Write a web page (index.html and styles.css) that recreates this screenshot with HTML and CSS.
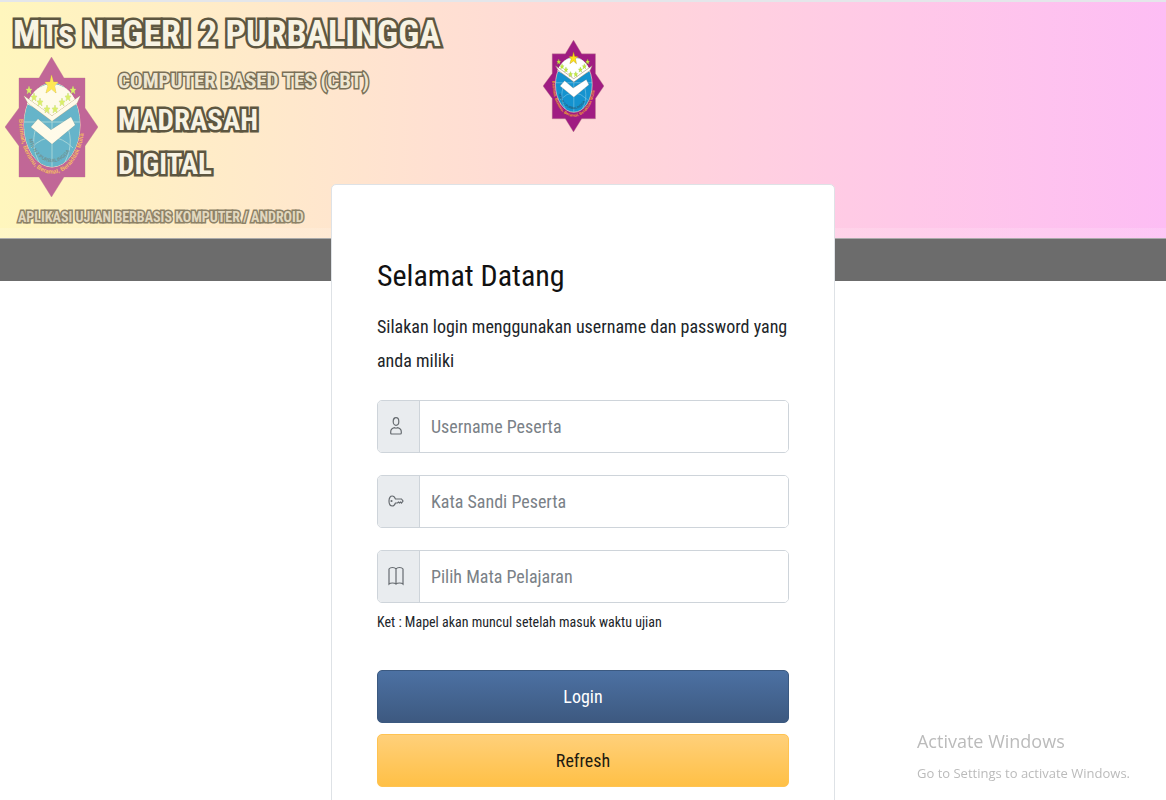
FILE: index.html
```html
<!DOCTYPE html>
<html lang="id">
<head>
    <meta charset="UTF-8">
    <meta name="viewport" content="width=device-width, initial-scale=1.0">
    <title>CBT MTs Negeri 2 Purbalingga</title>
    <link rel="stylesheet" href="styles.css">
</head>
<body>
    <header class="banner">
        <div class="brand">
            <h1 class="school">MTs NEGERI 2 PURBALINGGA</h1>
            <div class="brand-row">
                <svg class="emblem-large" viewBox="0 0 93 140" role="img" aria-label="Logo madrasah">
                    <g id="emblem">
                        <path fill="#a01c82" stroke="#b98a8a" stroke-width="0.6" d="M46.500 0L59 21H80V51L93 70L80 89V120H59L46.500 140L34 120H14V89L0 70L14 51V21H34Z"/>
                        <ellipse cx="47" cy="68" rx="28" ry="42" fill="#1593cf" stroke="#f3ddc0"/>
                        <path fill="none" stroke="#8fd0ea" stroke-width="0.8" d="M19 65H75M47 28V110M26 91Q47 70 68 91M34 105C26 90 28 75 34 64M60 105C68 90 66 75 60 64"/>
                        <path fill="#fff" d="M22 47C27 33 37 27 47 27S67 33 72 47L66 50L47 62L28 50Z"/>
                        <path fill="#fff" stroke="#9a7c60" stroke-width="0.8" d="M19 39L47 59L75 39L72 46L47 64L23 46Z"/>
                        <path fill="#fff" stroke="#776655" stroke-width="0.4" d="M33 62L46 73L66 60L70 68L47 87L26 70Z"/>
                        <path fill="#ffe21a" stroke="#a98a10" stroke-width="0.6" d="M46.500 18L48.500 25H53L49.500 29L51 36L46.500 32L41 36L43 29L40 25H45Z"/>
                        <g fill="#c8ec3c" stroke="#86b83a" stroke-width="0.4">
                            <path d="M24 29L25 32H27L25.500 34L26 37L24 35L22 37L22.500 34L21 32H23Z"/>
                            <path d="M68 29L69 32H71L69.500 34L70 37L68 35L66 37L66.500 34L65 32H67Z"/>
                            <path d="M29 36L30 39H32L30.500 41L31 44L29 42L27 44L27.500 41L26 39H28Z"/>
                            <path d="M63 36L64 39H66L64.500 41L65 44L63 42L61 44L61.500 41L60 39H62Z"/>
                            <path d="M35 41L36 44H38L36.500 46L37 49L35 47L33 49L33.500 46L32 44H34Z"/>
                            <path d="M57 41L58 44H60L58.500 46L59 49L57 47L55 49L55.500 46L54 44H56Z"/>
                            <path d="M42 48L43 51H45L43.500 53L44 56L42 54L40 56L40.500 53L39 51H41Z"/>
                            <path d="M50 48L51 51H53L51.500 53L52 56L50 54L48 56L48.500 53L47 51H49Z"/>
                        </g>
                        <path id="arc-in" fill="none" d="M24 82C32 113 62 113 70 82"/>
                        <path id="arc-out" fill="none" d="M14 62C15 135 79 135 80 62"/>
                        <text class="emblem-name"><textPath href="#arc-in">MTs N 2 PURBALINGGA</textPath></text>
                        <text class="emblem-motto"><textPath href="#arc-out">Beriman, Berilmu, Beramal, Berakhlak Mulia</textPath></text>
                    </g>
                </svg>
                <div class="brand-text">
                    <p class="cbt">COMPUTER BASED TES (CBT)</p>
                    <p class="digital">MADRASAH<br>DIGITAL</p>
                </div>
            </div>
            <p class="tagline">APLIKASI UJIAN BERBASIS KOMPUTER / ANDROID</p>
        </div>
        <svg class="emblem-small" viewBox="0 0 93 140" role="img" aria-label="Logo madrasah"><use href="#emblem"/></svg>
    </header>
    <div class="strip"></div>

    <main class="card">
        <h2>Selamat Datang</h2>
        <p class="intro">Silakan login menggunakan username dan password yang anda miliki</p>
        <form>
            <div class="input-group">
                <label for="username" aria-label="Username">
                    <svg class="icon" viewBox="0 0 12 18"><ellipse cx="6" cy="4.500" rx="2.800" ry="3.800"/><path d="M0.700 15C0.700 12 3 11 4.500 10.700Q6 11.500 7.500 10.700C9 11 11.300 12 11.300 15V16Q11.300 17 10.300 17H1.700Q0.700 17 0.700 16Z"/></svg>
                </label>
                <input type="text" id="username" placeholder="Username Peserta">
            </div>
            <div class="input-group">
                <label for="password" aria-label="Kata sandi">
                    <svg class="icon icon-key" viewBox="0 0 16 12"><path d="M7.500 4H13.500L15 6L13.500 8L12.500 7L11.500 8L10.500 7L9.500 8H7.500C6.500 10.500 5.500 11 4.300 11C2.300 11 1 9 1 6S2.300 1 4.300 1C5.500 1 6.500 1.500 7.500 4Z"/><circle cx="3.500" cy="6" r="0.500"/></svg>
                </label>
                <input type="password" id="password" placeholder="Kata Sandi Peserta">
            </div>
            <div class="input-group">
                <label for="mapel" aria-label="Mata pelajaran">
                    <svg class="icon icon-book" viewBox="0 0 16 20"><path d="M8 3Q7 1.500 4.500 1.500T1 3V18Q2 17 4.500 17T8 18Q9 17 11.500 17T15 18V3Q14 1.500 11.500 1.500T8 3V18"/></svg>
                </label>
                <select id="mapel">
                    <option>Pilih Mata Pelajaran</option>
                </select>
            </div>
            <p class="note">Ket : Mapel akan muncul setelah masuk waktu ujian</p>
            <button type="submit" class="btn btn-login">Login</button>
            <button type="button" class="btn btn-refresh">Refresh</button>
        </form>
    </main>

    <aside class="watermark">
        <p class="watermark-title">Activate Windows</p>
        <p>Go to Settings to activate Windows.</p>
    </aside>
</body>
</html>
```
FILE: styles.css
```css
* {
    box-sizing: border-box;
}

body {
    margin: 0;
    background-color: #fff;
    color: #212529;
    font-family: "Roboto Condensed", "Liberation Sans Narrow", Roboto, sans-serif;
    overflow-x: hidden;
}

h1, h2, p {
    margin: 0;
    font-weight: normal;
}

.banner {
    display: grid;
    grid-template-columns: 543px 1fr;
    height: 239px;
    border-top: 2px solid #e4e6ea;
    border-bottom: 1px solid #aaa;
    background:
        linear-gradient(rgba(255, 255, 255, 0.15), rgba(255, 255, 255, 0.15)) bottom / 100% 10px no-repeat,
        linear-gradient(to right, #fff6bd, #ffe8cc 25%, #ffd8d8 50%, #ffc8e8 78%, #fdbdf4);
}

.brand {
    color: #f8f3e3;
    -webkit-text-stroke: 5px #5d5640;
    paint-order: stroke fill;
    white-space: nowrap;
}

.brand p, .school {
    font-weight: bold;
}

.school {
    padding: 9px 0 0 13px;
    font-size: 36px;
    line-height: 46px;
}

.brand-row {
    display: flex;
    gap: 20px;
    padding-left: 5px;
}

.emblem-large {
    width: 93px;
    height: 140px;
    opacity: 0.65;
    -webkit-text-stroke: 0;
}

.brand-text {
    padding-top: 7px;
}

.brand .cbt {
    font-size: 21px;
    line-height: 34px;
    color: #eee6d0;
    -webkit-text-stroke: 3px #7a7058;
}

.digital {
    font-size: 29px;
    line-height: 44px;
}

.brand .tagline {
    padding: 8px 0 0 18px;
    font-size: 14px;
    line-height: 24px;
    color: #e2d8bf;
    -webkit-text-stroke: 3px #8d8267;
}

.emblem-small {
    width: 61px;
    height: 92px;
    margin-top: 38px;
}

.emblem-name {
    font: bold 5px "Liberation Sans", sans-serif;
    fill: #27617e;
}

.emblem-motto {
    font: bold 6px "Liberation Sans", sans-serif;
    fill: #f0a030;
}

.strip {
    height: 42px;
    background-color: #6c6c6c;
}

.card {
    position: relative;
    width: 504px;
    max-width: 100%;
    margin: -97px auto 0;
    padding: 68px 45px 45px;
    background-color: #fff;
    border: 1px solid #dee2e6;
    border-radius: 5px;
}

.card h2 {
    font-size: 30px;
    line-height: 46px;
    color: #111;
}

.intro {
    margin: 11px 0 22px;
    font-size: 18px;
    line-height: 34px;
}

.input-group {
    display: flex;
    height: 53px;
    margin-bottom: 22px;
    border: 1px solid #ced4da;
    border-radius: 5px;
    overflow: hidden;
}

.input-group label {
    display: flex;
    align-items: center;
    justify-content: center;
    width: 42px;
    padding: 0 6px 2px 0;
    background-color: #e9ecef;
    border-right: 1px solid #ced4da;
}

.input-group input,
.input-group select {
    flex: 1;
    min-width: 0;
    padding: 0 11px;
    border: 0;
    background-color: #fff;
    color: #7a8187;
    font-family: inherit;
    font-size: 18px;
    appearance: none;
}

.input-group input::placeholder {
    color: #7a8187;
}

.icon {
    width: 12px;
    height: 18px;
    fill: none;
    stroke: #666b70;
    stroke-width: 1.2;
}

.icon-key {
    width: 16px;
    height: 12px;
}

.icon-book {
    width: 16px;
    height: 20px;
}

.note {
    margin: -20px 0 31px;
    font-size: 14px;
    line-height: 34px;
}

.btn {
    display: block;
    width: 100%;
    height: 53px;
    margin-bottom: 11px;
    border: 1px solid #3b5980;
    border-radius: 5px;
    font-family: inherit;
    font-size: 18px;
    cursor: pointer;
}

.btn-login {
    background: linear-gradient(#4c71a3, #3d5980);
    color: #fff;
}

.btn-refresh {
    background: linear-gradient(#ffd07a, #ffc046);
    border-color: #ffc351;
    color: #1d1a10;
}

.watermark {
    position: fixed;
    right: 36px;
    bottom: 11px;
    color: #bbb;
    font-family: "Open Sans", sans-serif;
    font-size: 13px;
    line-height: 32px;
}

.watermark-title {
    font-size: 18px;
}
```
